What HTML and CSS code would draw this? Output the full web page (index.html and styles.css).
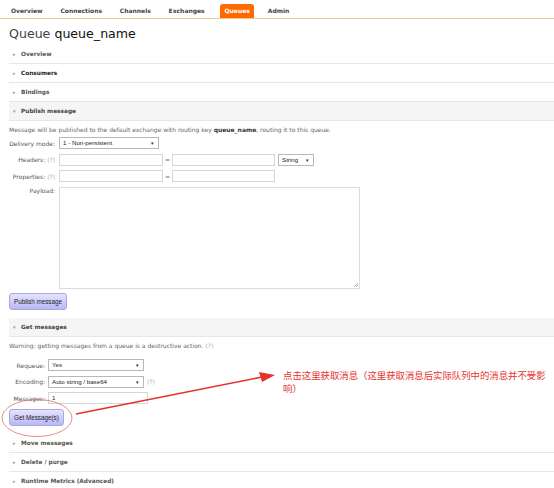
FILE: index.html
```html
<!DOCTYPE html>
<html lang="en">
<head>
  <meta charset="UTF-8">
  <title>RabbitMQ - Queue queue_name</title>
  <link rel="stylesheet" href="styles.css">
</head>
<body>
  <div class="nav">
    <ul class="tabs">
      <li class="tab">Overview</li>
      <li class="tab">Connections</li>
      <li class="tab">Channels</li>
      <li class="tab">Exchanges</li>
      <li class="tab active">Queues</li>
      <li class="tab">Admin</li>
    </ul>
  </div>

  <div class="main">
    <h1 class="title">Queue <b>queue_name</b></h1>

    <div class="section">
      <h2 class="section-head"><span class="tri">&#9656;</span>Overview</h2>
    </div>
    <div class="section">
      <h2 class="section-head dark"><span class="tri">&#9656;</span>Consumers</h2>
    </div>
    <div class="section">
      <h2 class="section-head"><span class="tri">&#9656;</span>Bindings</h2>
    </div>

    <div class="section open">
      <h2 class="section-head"><span class="tri">&#9662;</span>Publish message</h2>
      <div class="section-body">
        <p class="note">Message will be published to the default exchange with routing key <b>queue_name</b>, routing it to this queue.</p>
        <div class="form publish">
          <div class="row">
            <label>Delivery mode:</label>
            <div class="select w100">1 - Non-persistent<span class="caret">&#9662;</span></div>
          </div>
          <div class="row">
            <label>Headers: <span class="help">(?)</span></label>
            <div class="input w104"></div>
            <span class="eq">=</span>
            <div class="input w103"></div>
            <div class="select w36">String<span class="caret">&#9662;</span></div>
          </div>
          <div class="row">
            <label>Properties: <span class="help">(?)</span></label>
            <div class="input w104"></div>
            <span class="eq">=</span>
            <div class="input w103"></div>
          </div>
          <div class="row top">
            <label>Payload:</label>
            <div class="textarea"><span class="grip"></span></div>
          </div>
        </div>
        <button class="btn">Publish message</button>
      </div>
    </div>

    <div class="section open">
      <h2 class="section-head"><span class="tri">&#9662;</span>Get messages</h2>
      <div class="section-body">
        <p class="note warn">Warning: getting messages from a queue is a destructive action. <span class="help">(?)</span></p>
        <div class="form get">
          <div class="row">
            <label>Requeue:</label>
            <div class="select w96">Yes<span class="caret">&#9662;</span></div>
          </div>
          <div class="row">
            <label>Encoding:</label>
            <div class="select w96">Auto string / base64<span class="caret">&#9662;</span></div>
            <span class="help">(?)</span>
          </div>
          <div class="row">
            <label>Messages:</label>
            <div class="input w100">1</div>
          </div>
        </div>
        <button class="btn">Get Message(s)</button>
      </div>
    </div>

    <div class="section">
      <h2 class="section-head"><span class="tri">&#9656;</span>Move messages</h2>
    </div>
    <div class="section">
      <h2 class="section-head"><span class="tri">&#9656;</span>Delete / purge</h2>
    </div>
    <div class="section">
      <h2 class="section-head"><span class="tri">&#9656;</span>Runtime Metrics (Advanced)</h2>
    </div>
  </div>

  <!-- hand-drawn annotation on top of the screenshot -->
  <svg class="annot" width="554" height="488" viewBox="0 0 554 488">
    <ellipse cx="37" cy="418" rx="35" ry="18.5" fill="none" stroke="#e07070" stroke-width="0.8"/>
    <path d="M76 414 L262 377" stroke="#e8312c" stroke-width="1.6" fill="none"/>
    <path d="M275 375 L259 372 L262 382 Z" fill="#e8312c"/>
  </svg>
  <div class="annot-text">点击这里获取消息（这里获取消息后实际队列中的消息并不受影<br>响）</div>
</body>
</html>
```

FILE: styles.css
```css
* {
  margin: 0;
  padding: 0;
  box-sizing: border-box;
}

body {
  width: 554px;
  height: 488px;
  overflow: hidden;
  background: #fff;
  font-family: "DejaVu Sans", Verdana, sans-serif;
  font-size: 6px;
  color: #555;
  position: relative;
}

/* top tabs */
.nav {
  height: 19px;
  padding-top: 4px;
  border-bottom: 1px solid #f0c98a;
}
.tabs {
  list-style: none;
  display: flex;
  padding-left: 3px;
}
.tab {
  font-weight: bold;
  font-size: 6px;
  color: #444;
  height: 14px;
  line-height: 14px;
  padding: 0 8px;
  margin-right: 1.8px;
  border-radius: 3px 3px 0 0;
}
.tab.active {
  background: #ff6a00;
  color: #fff;
  padding: 0 4px;
  margin: 0 6px;
}

.main {
  padding-left: 9px;
}

.title {
  font-size: 12.6px;
  font-weight: normal;
  color: #444;
  height: 26px;
  line-height: 30px;
}
.title b {
  font-weight: normal;
  color: #111;
}

/* collapsible sections */
.section-head {
  font-size: 5.8px;
  font-weight: bold;
  color: #555;
  height: 19px;
  line-height: 18px;
  border-bottom: 1px solid #e6e6e6;
}
.section-head.dark {
  color: #222;
}
.section.open .section-head {
  background: #f5f5f5;
  color: #444;
}
.tri {
  display: inline-block;
  width: 12px;
  padding-left: 4px;
  color: #999;
  font-size: 5px;
}

.section-body {
  padding: 2px 0 8px;
}

.note {
  height: 13px;
  line-height: 13px;
  margin-bottom: 1px;
  color: #666;
}
.note.warn {
  margin-bottom: 7px;
}
.note b {
  color: #333;
}
.help {
  color: #aaa;
}

/* form rows */
.row {
  display: flex;
  align-items: center;
  margin-bottom: 4.5px;
}
.row.top {
  align-items: flex-start;
}
.form label {
  flex-shrink: 0;
  text-align: right;
  color: #555;
}
.publish label {
  width: 46px;
  margin-right: 4px;
}
.get label {
  width: 36px;
  margin-right: 3px;
}
.row > .help {
  margin-left: 3px;
}

.input,
.select,
.textarea {
  position: relative;
  height: 12px;
  padding: 0 3px;
  border: 1px solid #d6d6d6;
  background: #fff;
  font-family: "Liberation Sans", Arial, sans-serif;
  font-size: 6.2px;
  line-height: 10px;
  color: #222;
}
.select {
  border-color: #b8b8b8;
}
.caret {
  position: absolute;
  right: 4px;
  top: 0;
  font-size: 5px;
  color: #222;
}
.w100 { width: 100px; }
.w96 { width: 96px; }
.w104 { width: 104px; }
.w103 { width: 103px; }
.w36 { width: 36px; margin-left: 3px; }

.eq {
  width: 9px;
  text-align: center;
  color: #777;
}

.textarea {
  width: 301px;
  height: 102px;
  border-color: #dcdcdc;
}
.grip {
  position: absolute;
  right: 1px;
  bottom: 1px;
  width: 4px;
  height: 4px;
  background: linear-gradient(135deg, transparent 45%, #aaa 45%, #aaa 55%, transparent 55%, transparent 70%, #aaa 70%, #aaa 80%, transparent 80%);
}

.btn {
  display: block;
  height: 17px;
  margin-top: 2px;
  padding: 0 4px;
  border: 1px solid #a8a8e0;
  border-radius: 3px;
  background: linear-gradient(#e4e4ff, #b8b8f4);
  font-family: "Liberation Sans", Arial, sans-serif;
  font-size: 6.3px;
  color: #222;
}

/* annotation overlay */
.annot {
  position: absolute;
  left: 0;
  top: 0;
  pointer-events: none;
}
.annot-text {
  position: absolute;
  left: 283px;
  top: 369px;
  width: 271px;
  font-family: "Noto Sans CJK SC", sans-serif;
  font-size: 9.4px;
  line-height: 13px;
  color: #e8312c;
  white-space: nowrap;
}
```
